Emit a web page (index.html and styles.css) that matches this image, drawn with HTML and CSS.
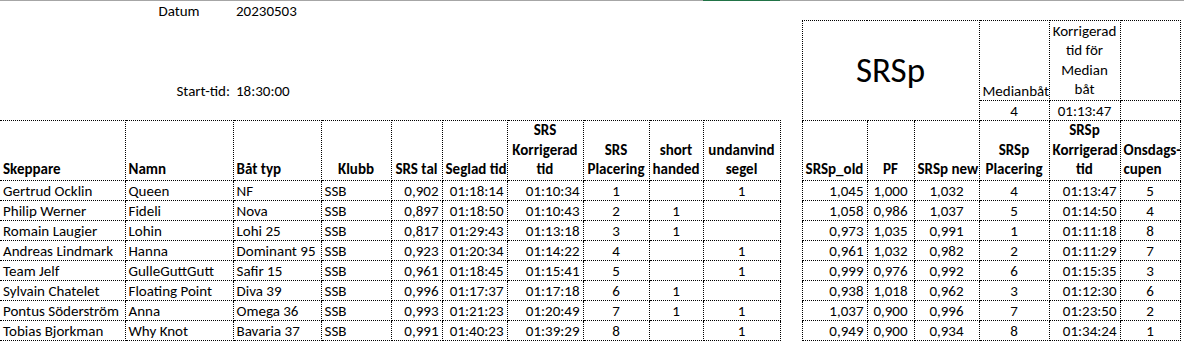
FILE: index.html
```html
<!DOCTYPE html>
<html lang="sv">
<head>
<meta charset="utf-8">
<title>SRS resultat 20230503</title>
<link rel="stylesheet" href="styles.css">
</head>
<body>
<div class="topbar"><div class="sel"></div></div>
<table class="sheet">
<colgroup>
<col class="cA"><col class="cB"><col class="cC"><col class="cD"><col class="cE"><col class="cF"><col class="cG"><col class="cH"><col class="cI"><col class="cJ"><col class="cK"><col class="cL"><col class="cM"><col class="cN"><col class="cO"><col class="cP"><col class="cQ"><col class="cR">
</colgroup>
<tbody>
<tr class="r1">
<td></td><td class="c">Datum</td><td>20230503</td><td></td><td></td><td></td><td></td><td></td><td></td><td></td><td></td><td></td><td></td><td></td><td></td><td></td><td></td><td></td>
</tr>
<tr class="r2">
<td></td><td class="r">Start-tid:</td><td>18:30:00</td><td></td><td></td><td></td><td></td><td></td><td></td><td></td><td></td>
<td class="b big" colspan="3" rowspan="2">SRSp</td>
<td class="b c">Medianbåt</td>
<td class="b c wrap">Korrigerad<br>tid för<br>Median<br>båt</td>
<td class="b"></td><td></td>
</tr>
<tr class="r3">
<td></td><td></td><td></td><td></td><td></td><td></td><td></td><td></td><td></td><td></td><td></td>
<td class="b c">4</td><td class="b c">01:13:47</td><td class="b"></td><td></td>
</tr>
<tr class="head">
<td class="b first">Skeppare</td><td class="b">Namn</td><td class="b">Båt typ</td><td class="b c">Klubb</td><td class="b c">SRS tal</td><td class="b c">Seglad tid</td><td class="b c">SRS<br>Korrigerad<br>tid</td><td class="b c">SRS<br>Placering</td><td class="b c">short<br>handed</td><td class="b c">undanvind<br>segel</td>
<td></td>
<td class="b c">SRSp_old</td><td class="b c">PF</td><td class="b c">SRSp new</td><td class="b c">SRSp<br>Placering</td><td class="b c">SRSp<br>Korrigerad<br>tid</td><td class="b">Onsdags-<br>cupen</td><td></td>
</tr>
<tr>
<td class="b first">Gertrud Ocklin</td><td class="b">Queen</td><td class="b">NF</td><td class="b">SSB</td><td class="b r">0,902</td><td class="b r">01:18:14</td><td class="b r">01:10:34</td><td class="b c">1</td><td class="b c"></td><td class="b c">1</td>
<td></td>
<td class="b r">1,045</td><td class="b c">1,000</td><td class="b c">1,032</td><td class="b c">4</td><td class="b r">01:13:47</td><td class="b c">5</td><td></td>
</tr>
<tr>
<td class="b first">Philip Werner</td><td class="b">Fideli</td><td class="b">Nova</td><td class="b">SSB</td><td class="b r">0,897</td><td class="b r">01:18:50</td><td class="b r">01:10:43</td><td class="b c">2</td><td class="b c">1</td><td class="b c"></td>
<td></td>
<td class="b r">1,058</td><td class="b c">0,986</td><td class="b c">1,037</td><td class="b c">5</td><td class="b r">01:14:50</td><td class="b c">4</td><td></td>
</tr>
<tr>
<td class="b first">Romain Laugier</td><td class="b">Lohin</td><td class="b">Lohi 25</td><td class="b">SSB</td><td class="b r">0,817</td><td class="b r">01:29:43</td><td class="b r">01:13:18</td><td class="b c">3</td><td class="b c">1</td><td class="b c"></td>
<td></td>
<td class="b r">0,973</td><td class="b c">1,035</td><td class="b c">0,991</td><td class="b c">1</td><td class="b r">01:11:18</td><td class="b c">8</td><td></td>
</tr>
<tr>
<td class="b first">Andreas Lindmark</td><td class="b">Hanna</td><td class="b">Dominant 95</td><td class="b">SSB</td><td class="b r">0,923</td><td class="b r">01:20:34</td><td class="b r">01:14:22</td><td class="b c">4</td><td class="b c"></td><td class="b c">1</td>
<td></td>
<td class="b r">0,961</td><td class="b c">1,032</td><td class="b c">0,982</td><td class="b c">2</td><td class="b r">01:11:29</td><td class="b c">7</td><td></td>
</tr>
<tr>
<td class="b first">Team Jelf</td><td class="b">GulleGuttGutt</td><td class="b">Safir 15</td><td class="b">SSB</td><td class="b r">0,961</td><td class="b r">01:18:45</td><td class="b r">01:15:41</td><td class="b c">5</td><td class="b c"></td><td class="b c">1</td>
<td></td>
<td class="b r">0,999</td><td class="b c">0,976</td><td class="b c">0,992</td><td class="b c">6</td><td class="b r">01:15:35</td><td class="b c">3</td><td></td>
</tr>
<tr>
<td class="b first">Sylvain Chatelet</td><td class="b">Floating Point</td><td class="b">Diva 39</td><td class="b">SSB</td><td class="b r">0,996</td><td class="b r">01:17:37</td><td class="b r">01:17:18</td><td class="b c">6</td><td class="b c">1</td><td class="b c"></td>
<td></td>
<td class="b r">0,938</td><td class="b c">1,018</td><td class="b c">0,962</td><td class="b c">3</td><td class="b r">01:12:30</td><td class="b c">6</td><td></td>
</tr>
<tr>
<td class="b first">Pontus Söderström</td><td class="b">Anna</td><td class="b">Omega 36</td><td class="b">SSB</td><td class="b r">0,993</td><td class="b r">01:21:23</td><td class="b r">01:20:49</td><td class="b c">7</td><td class="b c">1</td><td class="b c">1</td>
<td></td>
<td class="b r">1,037</td><td class="b c">0,900</td><td class="b c">0,996</td><td class="b c">7</td><td class="b r">01:23:50</td><td class="b c">2</td><td></td>
</tr>
<tr>
<td class="b first">Tobias Bjorkman</td><td class="b">Why Knot</td><td class="b">Bavaria 37</td><td class="b">SSB</td><td class="b r">0,991</td><td class="b r">01:40:23</td><td class="b r">01:39:29</td><td class="b c">8</td><td class="b c"></td><td class="b c">1</td>
<td></td>
<td class="b r">0,949</td><td class="b c">0,900</td><td class="b c">0,934</td><td class="b c">8</td><td class="b r">01:34:24</td><td class="b c">1</td><td></td>
</tr>
</tbody>
</table>
</body>
</html>
```
FILE: styles.css
```css
html, body {
  margin: 0;
  padding: 0;
  background: #fff;
}
body {
  font-family: Calibri, Carlito, Lato, "Liberation Sans", sans-serif;
  font-size: 15px;
  color: #000;
  overflow: hidden;
}
.topbar {
  height: 1px;
  background: #a6a6a6;
  display: flex;
}
.topbar .sel {
  margin-left: 703px;
  width: 77px;
  background: #217346;
}
.sheet {
  border-collapse: collapse;
  table-layout: fixed;
  width: 1184px;
}
.cA { width: 125px; }
.cB { width: 108px; }
.cC { width: 88px; }
.cD { width: 70px; }
.cE { width: 51px; }
.cF { width: 65px; }
.cG { width: 76px; }
.cH { width: 66px; }
.cI { width: 54px; }
.cJ { width: 77px; }
.cK { width: 22px; }
.cL { width: 65px; }
.cM { width: 47px; }
.cN { width: 65px; }
.cO { width: 70px; }
.cP { width: 71px; }
.cQ { width: 60px; }
.cR { width: 4px; }
.sheet tr { height: 20px; }
.sheet tr.r1 { height: 19px; }
.sheet tr.r2 { height: 80px; }
.sheet tr.r3 { height: 20px; }
.sheet tr.head { height: 60px; }
.sheet td {
  padding: 0 3px;
  line-height: 17px;
  vertical-align: bottom;
  white-space: nowrap;
  overflow: hidden;
  text-align: left;
}
.sheet .head td {
  font-weight: bold;
  line-height: 19.5px;
}
.sheet td.b { border: 1px dotted #000; }
.sheet td.first { border-left: none; }
.sheet td.c { text-align: center; }
.sheet td.r { text-align: right; }
.sheet td.wrap { line-height: 19.5px; }
.sheet td.big {
  font-size: 35px;
  line-height: 40px;
  text-align: center;
  vertical-align: middle;
}
```
